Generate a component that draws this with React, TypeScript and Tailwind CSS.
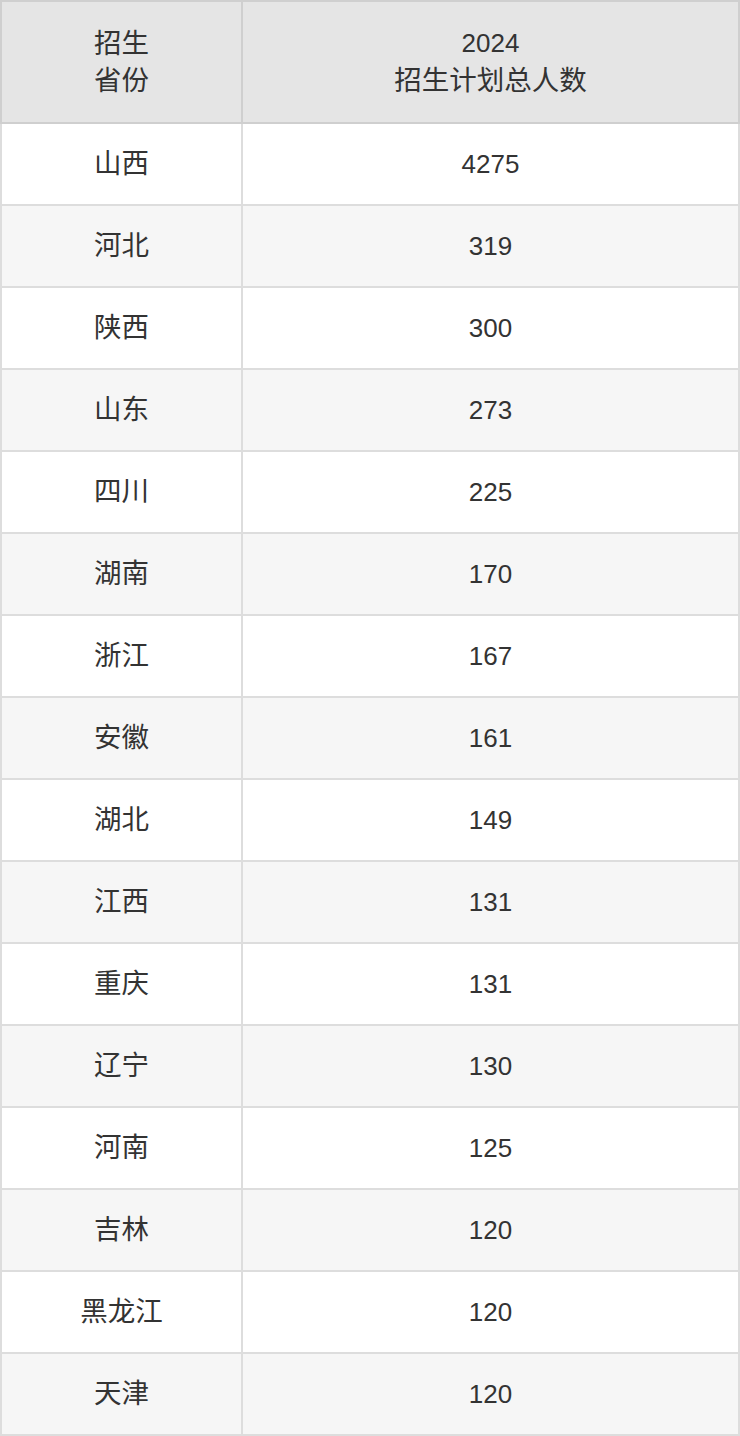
const rows: [string, string][] = [
  ['山西', '4275'],
  ['河北', '319'],
  ['陕西', '300'],
  ['山东', '273'],
  ['四川', '225'],
  ['湖南', '170'],
  ['浙江', '167'],
  ['安徽', '161'],
  ['湖北', '149'],
  ['江西', '131'],
  ['重庆', '131'],
  ['辽宁', '130'],
  ['河南', '125'],
  ['吉林', '120'],
  ['黑龙江', '120'],
  ['天津', '120'],
]

export default function App() {
  return (
    <div
      className="w-[740px] text-[26px] text-[#333]"
      style={{ fontFamily: '"Liberation Sans", "Noto Sans CJK SC", sans-serif' }}
    >
      <div className="flex h-[124px] border-2 border-[#cfcfcf] bg-[#e5e5e5] leading-[37px]">
        <div className="flex w-[241px] shrink-0 items-center justify-center border-r-2 border-[#cfcfcf] text-center text-[27.5px]">
          招生<br />省份
        </div>
        <div className="flex flex-1 items-center justify-center text-center">
          <div>
            2024<br />
            <span className="text-[27.5px]">招生计划总人数</span>
          </div>
        </div>
      </div>
      {rows.map(([prov, n], i) => (
        <div
          key={prov}
          className={
            'flex h-[82px] border-x-2 border-b-2 border-[#dddddd] ' +
            (i % 2 === 0 ? 'bg-white' : 'bg-[#f6f6f6]')
          }
        >
          <div className="flex w-[241px] shrink-0 items-center justify-center border-r-2 border-[#dddddd] text-[27.5px]">
            {prov}
          </div>
          <div className="flex flex-1 items-center justify-center">{n}</div>
        </div>
      ))}
    </div>
  )
}
